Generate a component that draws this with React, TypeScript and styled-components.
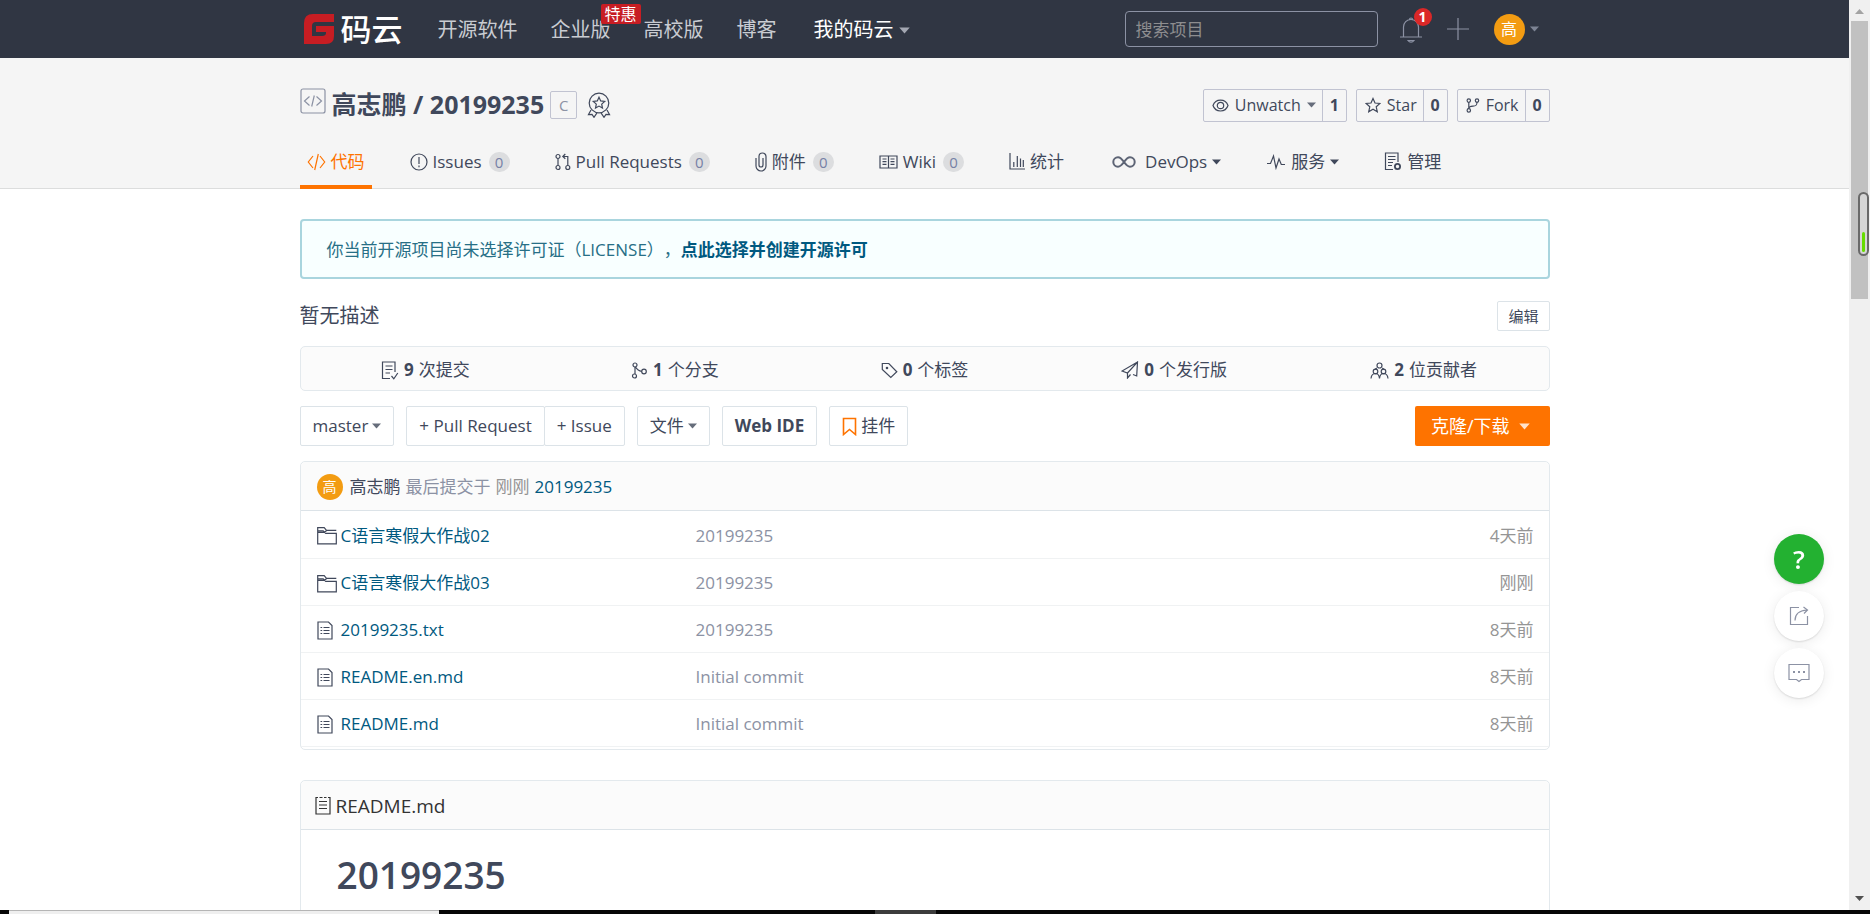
import React from "react";
import styled, { createGlobalStyle } from "styled-components";

const color = {
  navy: "#303643",
  ink: "#40485b",
  muted: "#8c92a4",
  grey: "#959595",
  link: "#005980",
  orange: "#fe7300",
  line: "#dce3e8",
  panel: "#fbfbfb",
};

const GlobalStyle = createGlobalStyle`
  *, *::before, *::after { box-sizing: border-box; }
  body {
    margin: 0;
    overflow: hidden;
    background: #fff;
    color: ${color.ink};
    font-family: "Open Sans", "Noto Sans CJK SC", sans-serif;
    font-size: 17px;
    line-height: 24px;
  }
  a { color: inherit; text-decoration: none; }
  button, input { font: inherit; color: inherit; margin: 0; }
  button { background: none; border: 0; padding: 0; cursor: pointer; }
  h1, h2, p, ul { margin: 0; padding: 0; }
  b { font-weight: 700; }
  ul { list-style: none; }
`;

/* ---------- frame ---------- */

const Frame = styled.div`
  display: flex;
  flex-direction: column;
  height: 100vh;
`;

const Viewport = styled.div`
  display: flex;
  flex: 1;
  min-height: 0;
`;

const Page = styled.div`
  flex: 1;
  min-width: 0;
  overflow: hidden;
`;

const ScrollTrack = styled.div`
  display: flex;
  flex-direction: column;
  align-items: center;
  width: 21px;
  padding: 9px 0;
  background: #f0f0f0;
`;

const ScrollThumb = styled.div`
  width: 17px;
  height: 278px;
  margin: 7px 0 auto;
  background: #c1c1c1;
`;

const Gauge = styled.div`
  position: fixed;
  top: 192px;
  right: 1px;
  display: flex;
  align-items: flex-end;
  width: 11px;
  height: 64px;
  padding: 2px;
  border: 2px solid #696969;
  border-radius: 6px;
  background: #d6d6d6;
`;

const GaugeLevel = styled.div`
  width: 100%;
  height: 20px;
  border-radius: 2px;
  background: #66dd00;
`;

const BottomStrip = styled.div`
  display: flex;
  height: 4px;
  background: #060606;
`;

const StripLight = styled.div`
  width: 430px;
  margin-left: 9px;
  border-top: 1px solid #b5b5b5;
  background: #efefef;
`;

const StripDark = styled.div`
  width: 61px;
  margin-left: 436px;
  background: #3c3c3c;
`;

const Container = styled.div`
  width: 1250px;
  max-width: 100%;
  margin: 0 auto;
`;

/* ---------- icons ---------- */

const Svg = styled.svg`
  display: block;
  flex: none;
  fill: none;
  stroke: currentColor;
  stroke-width: 1.2;
`;

type GlyphProps = { w: number; h: number; children: React.ReactNode };
const Glyph = ({ w, h, children }: GlyphProps) => (
  <Svg width={w} height={h} viewBox={`0 0 ${w} ${h}`} aria-hidden="true">
    {children}
  </Svg>
);

const Caret = ({ tint = "#666d7b", big }: { tint?: string; big?: boolean }) => (
  <Svg width={big ? 11 : 9} height={big ? 7 : 6} viewBox="0 0 9 6" aria-hidden="true">
    <path d="M0 0.5h9L4.5 5.5z" fill={tint} stroke="none" />
  </Svg>
);

const CodeIcon = () => (
  <Glyph w={19} h={18}>
    <path d="M6 3 1.3 9 6 15M13 3l4.7 6L13 15M11.3 1 7.7 17" />
  </Glyph>
);
const IssueIcon = () => (
  <Glyph w={18} h={18}>
    <circle cx="9" cy="9" r="8" />
    <path d="M9 4v7M9 12.5v1.8" />
  </Glyph>
);
const PullIcon = () => (
  <Glyph w={16} h={18}>
    <circle cx="3" cy="3.5" r="2" />
    <circle cx="3" cy="14.5" r="2" />
    <circle cx="12.8" cy="14.5" r="2" />
    <path d="M3 5.5v7M12.8 12.5V3.5H8M10.3 1 7.8 3.5l2.5 2.3" />
  </Glyph>
);
const ClipIcon = () => (
  <Glyph w={12} h={20}>
    <path d="M1 6v8a5 5 0 0 0 10 0V4.5a3.5 3.5 0 0 0-7 0V13a2 2 0 0 0 4 0V6" />
  </Glyph>
);
const BookIcon = () => (
  <Glyph w={19} h={14}>
    <path d="M1 1h17v12H1zM9.5 1v12M3.5 4h4M3.5 6.7h4M3.5 9.4h4M11.5 4h4M11.5 6.7h4M11.5 9.4h4" />
  </Glyph>
);
const ChartIcon = () => (
  <Glyph w={16} h={17}>
    <path d="M1 0v16h15M4.8 9v5M8.3 3v11M11.5 5.500v8.500M14.300 7v7" />
  </Glyph>
);
const InfinityIcon = () => (
  <Svg width="31" height="12" viewBox="-3 0 31 12" aria-hidden="true">
    <path
      strokeWidth="2"
      stroke="#5d6475"
      d="M12 6C9.500 2.500 8 1.300 6 1.300a4.700 4.700 0 0 0 0 9.400c2 0 3.500-1.200 6-4.700s4-4.700 6-4.700a4.700 4.700 0 0 1 0 9.400c-2 0-3.500-1.200-6-4.700z"
    />
  </Svg>
);
const PulseIcon = () => (
  <Glyph w={20} h={16}>
    <path d="M1 9.500h3.500L7.500 2l2.500 12 3-9 2.300 5.500H19" />
  </Glyph>
);
const ManageIcon = () => (
  <Glyph w={18} h={19}>
    <path d="M9 17.500H1.500V1H14v9M4 4.500h7.500M4 7.500h7.500M4 10.500h5M4 13.500h4" />
    <circle cx="13.500" cy="14.500" r="2.600" strokeWidth="1.800" />
  </Glyph>
);
const EyeIcon = () => (
  <Glyph w={17} h={13}>
    <path d="M1 6.500C3.500-.8 13.500-.8 16 6.500 13.500 13.800 3.500 13.800 1 6.500z" />
    <circle cx="8.500" cy="6.500" r="3.200" />
  </Glyph>
);
const StarIcon = () => (
  <Glyph w={16} h={16}>
    <path d="m8 1.500 2 4.500 4.900.5-3.700 3.300 1.100 4.900L8 12.200l-4.300 2.500 1.100-4.900L1.100 6.500 6 6z" />
  </Glyph>
);
const ForkIcon = () => (
  <Glyph w={14} h={15}>
    <circle cx="2.800" cy="2.600" r="1.700" />
    <circle cx="2.800" cy="12.400" r="1.700" />
    <circle cx="11" cy="2.600" r="1.700" />
    <path d="M2.800 4.300v6.400M11 4.300c0 3.200-1.200 3.700-4 3.900-2.500.2-4.200.8-4.200 2.500" />
  </Glyph>
);
const MedalIcon = () => (
  <Glyph w={24} h={26}>
    <circle cx="12" cy="11" r="9.800" />
    <path d="m12 5.200 1.700 3.700 4 .5-3 2.700.8 4-3.500-2-3.500 2 .8-4-3-2.700 4-.5z" />
    <path d="M4 18 1.500 22.500l3.500-.2 2 3 3-4.500M20 18l2.500 4.500-3.500-.2-2 3-3-4.500" />
  </Glyph>
);
const RepoIcon = () => (
  <Glyph w={26} h={26}>
    <g stroke={color.muted}>
      <rect x="1" y="1" width="24" height="24" rx="2" />
      <path d="m9.500 8.500-5 4.500 5 4.500M16.500 8.500l5 4.500-5 4.500M14.300 7.500l-2.600 11" />
    </g>
  </Glyph>
);
const BellIcon = () => (
  <Glyph w={22} h={28}>
    <path d="M3.500 22V12a7.500 7.500 0 0 1 15 0v10M0 22h22M8 25.500c1.500 2.200 4.500 2.200 6 0zM9.500 4.500a1.500 1.500 0 1 1 3 0" />
  </Glyph>
);
const PlusIcon = () => (
  <Glyph w={22} h={22}>
    <path d="M11 0v22M0 11h22" />
  </Glyph>
);
const CommitIcon = () => (
  <Glyph w={18} h={19}>
    <path d="M9 17.500H1.500V1H14v10M4.500 5h7M4.500 8.500h7M4.500 12h4.500M10.500 15l2.300 2.800L16.800 12" />
  </Glyph>
);
const BranchIcon = () => (
  <Glyph w={17} h={17}>
    <circle cx="4" cy="3" r="2" />
    <circle cx="3.500" cy="14" r="2" />
    <circle cx="13" cy="9.500" r="2.300" />
    <path d="M4 5v7M4.500 5c1.500 2.500 3.500 4 6.200 4.300" />
  </Glyph>
);
const TagIcon = () => (
  <Glyph w={17} h={17}>
    <path d="M1.300 1.500h6.500l8 8.300-6 5.700-8.500-8z" />
    <circle cx="6" cy="6" r=".7" fill="currentColor" />
  </Glyph>
);
const PlaneIcon = () => (
  <Glyph w={18} h={18}>
    <path d="M16.500 1 1 10l5.500 2L16.500 1l-.8 14-3.700-1.500M6.500 12v5l3-3.500" />
  </Glyph>
);
const PeopleIcon = () => (
  <Glyph w={19} h={17}>
    <circle cx="9.500" cy="3.500" r="2.500" />
    <circle cx="5.500" cy="9.500" r="2.300" />
    <circle cx="13.500" cy="9.500" r="2.300" />
    <path d="M1 16.500c.3-3 1.800-5 4.500-5s3.700 2 4 5c.3-3 1.300-5 4-5s4.200 2 4.500 5M7 6C5.500 6.500 5 7 4.800 8M12 6c1.500.5 2 1 2.200 2" />
  </Glyph>
);
const BookmarkIcon = () => (
  <Glyph w={15} h={19}>
    <path d="M1.500 1.500h12v16l-6-5-6 5z" stroke="#fe7300" strokeWidth="1.600" />
  </Glyph>
);
const FolderIcon = () => (
  <Glyph w={20} h={19}>
    <path d="M.7 17.800V6.300h6.500l2.300 -1.500h0M.7 4.500V1.700h6.500l2.300 2.600h9.800M.7 6.300V4.800h5.500l2.500 2.500h10.600v10.500H.7z" />
  </Glyph>
);
const FileIcon = () => (
  <Glyph w={16} h={19}>
    <path d="M1 1h10.500L15 4.500V18H1zM3.500 6.500h1.700M6.500 6.500h6M3.500 9.500h1.700M6.500 9.500h6M3.500 12.500h1.700M6.500 12.500h6" />
  </Glyph>
);
const ReadmeIcon = () => (
  <Glyph w={16} h={19}>
    <path d="M3 1.500H1V18h14V1.500h-2M4.500 1.500h3M9 1.500h2.500M4 5.500h8M4 9h8M4 12.500h8" />
  </Glyph>
);
const ShareIcon = () => (
  <Glyph w={20} h={20}>
    <path d="M10 1.500H1.500v17h17V10M6 14.500C6 8 10 4.500 18 4M14.500 1l4 3-3.500 3.500" />
  </Glyph>
);
const ChatIcon = () => (
  <Glyph w={22} h={20}>
    <path d="M1 1.500h20v15h-7.500l-2.500 2-2.500-2H1z" />
    <path d="M5 9h2M10 9h2M15 9h2" strokeWidth="2" />
  </Glyph>
);
const LogoMark = () => (
  <Svg width="30" height="30" viewBox="0 0 30 30" aria-hidden="true">
    <path
      d="M9 0H30V8H12Q8 8 8 12V22H18Q22 22 22 19V18H12V12H30V22Q30 30 22 30H0V9Q0 0 9 0z"
      fill="#c71d23"
      stroke="none"
    />
  </Svg>
);

/* ---------- top bar ---------- */

const TopBar = styled.header`
  background: ${color.navy};
`;

const TopInner = styled(Container)`
  display: flex;
  align-items: center;
  height: 58px;
  padding: 0 11px 0 4px;
`;

const Brand = styled.a`
  display: flex;
  align-items: center;
  gap: 7px;
  margin-right: 35px;
  color: #fff;
  font-size: 31px;
  font-weight: 500;
  line-height: 30px;
`;

const MainNav = styled.nav`
  display: flex;
  gap: 33px;
  padding-top: 2px;
  color: #c9ccd2;
  font-size: 20px;
`;

const NavLink = styled.a<{ $bright?: boolean }>`
  position: relative;
  display: flex;
  align-items: center;
  gap: 5px;
  margin-left: ${(p) => (p.$bright ? 4 : 0)}px;
  color: ${(p) => (p.$bright ? "#fff" : "inherit")};
`;

const Promo = styled.span`
  position: absolute;
  top: -14px;
  left: 50px;
  padding: 0 4px;
  border-radius: 2px;
  background: #c71d23;
  color: #fff;
  font-size: 16px;
  line-height: 20px;
  white-space: nowrap;
`;

const TopTools = styled.div`
  display: flex;
  align-items: center;
  margin-left: auto;
  color: #8c92a4;
`;

const Search = styled.input`
  width: 253px;
  height: 36px;
  margin-right: 22px;
  padding: 0 10px;
  border: 1px solid #8c92a4;
  border-radius: 4px;
  background: transparent;
  color: #fff;
  outline: none;
  &::placeholder {
    color: #8d8d8f;
    opacity: 1;
  }
`;

const IconButton = styled.button`
  position: relative;
  display: flex;
  align-items: center;
  gap: 5px;
  margin-right: 25px;
  &:last-child {
    margin-right: 0;
  }
`;

const Notice = styled.span`
  position: absolute;
  top: -7px;
  left: 14px;
  width: 18px;
  border-radius: 9px;
  background: #db2828;
  color: #fff;
  font-size: 14px;
  font-weight: 700;
  line-height: 18px;
  text-align: center;
`;

const Avatar = styled.span<{ $size: number }>`
  display: grid;
  place-items: center;
  flex: none;
  width: ${(p) => p.$size}px;
  height: ${(p) => p.$size}px;
  border-radius: 50%;
  background: #f39c12;
  color: #fff;
  font-size: ${(p) => (p.$size > 30 ? 16 : 14)}px;
  line-height: 1;
`;

/* ---------- repository header ---------- */

const RepoHead = styled.section`
  border-bottom: 1px solid #dcdddd;
  background: #f5f5f5;
`;

const TitleRow = styled.div`
  display: flex;
  align-items: center;
  justify-content: space-between;
  padding-top: 30px;
`;

const TitleGroup = styled.div`
  display: flex;
  align-items: center;
  gap: 6px;
  > svg:first-child {
    align-self: flex-start;
  }
`;

const RepoTitle = styled.h2`
  padding-bottom: 2px;
  font-size: 25px;
  font-weight: 700;
  line-height: 32px;
`;

const LangTag = styled.a`
  width: 27px;
  margin-right: 4px;
  border: 1px solid #c1c3d1;
  border-radius: 2px;
  color: ${color.muted};
  font-size: 15px;
  line-height: 26px;
  text-align: center;
`;

const Actions = styled.div`
  display: flex;
  gap: 9px;
`;

const SplitButton = styled.div`
  display: flex;
  border: 1px solid #c1c3d1;
  border-radius: 2px;
  line-height: 31px;
`;

const ActionButton = styled.button`
  display: flex;
  align-items: center;
  gap: 6px;
  padding: 0 6px 0 8px;
  font-size: 16px;
  line-height: 31px;
`;

const ActionCount = styled.a`
  min-width: 24px;
  border-left: 1px solid #c1c3d1;
  font-size: 16px;
  font-weight: 700;
  text-align: center;
`;

const Tabs = styled.nav`
  display: flex;
  gap: 31px;
  margin: 14px 0 -1px;
`;

const Tab = styled.a<{ $active?: boolean }>`
  display: flex;
  align-items: center;
  gap: 5px;
  height: 53px;
  padding: 2px 7px 0;
  border-bottom: 4px solid ${(p) => (p.$active ? color.orange : "transparent")};
  color: ${(p) => (p.$active ? color.orange : color.ink)};
`;

const TabCount = styled.span`
  min-width: 21px;
  margin-left: 2px;
  border-radius: 10px;
  background: #dcdddf;
  color: #7681a6;
  font-size: 15px;
  line-height: 20px;
  text-align: center;
`;

/* ---------- body ---------- */

const LicenseNote = styled.div`
  margin-top: 30px;
  padding: 17px 25px 15px;
  border: 2px solid #a9d5de;
  border-radius: 4px;
  background: #f8ffff;
  color: #276f86;
  text-spacing-trim: space-all;
  a {
    color: ${color.link};
    font-weight: 700;
  }
`;

const Description = styled.div`
  display: flex;
  align-items: center;
  justify-content: space-between;
  margin: 22px 0 15px;
  font-size: 20px;
`;

const EditButton = styled.button`
  padding: 0 10px;
  border: 1px solid ${color.line};
  border-radius: 2px;
  font-size: 15px;
  line-height: 28px;
`;

const Stats = styled.ul`
  display: grid;
  grid-template-columns: repeat(5, 1fr);
  border: 1px solid #e3e9ed;
  border-radius: 5px;
  background: ${color.panel};
`;

const Stat = styled.li`
  a {
    display: flex;
    align-items: center;
    justify-content: center;
    gap: 5px;
    padding: 11px 0 8px;
  }
`;

const Toolbar = styled.div`
  display: flex;
  align-items: center;
  gap: 12px;
  margin: 15px 0;
`;

const ToolButton = styled.button<{ $bold?: boolean }>`
  display: flex;
  align-items: center;
  gap: 4px;
  padding: 0 12px;
  border: 1px solid ${color.line};
  border-radius: 2px;
  background: #fff;
  font-weight: ${(p) => (p.$bold ? 700 : 400)};
  line-height: 38px;
  white-space: nowrap;
`;

const ButtonGroup = styled.div`
  display: flex;
  ${ToolButton} + ${ToolButton} {
    margin-left: -1px;
  }
`;

const CloneButton = styled.button`
  display: flex;
  align-items: center;
  gap: 9px;
  margin-left: auto;
  padding: 0 20px 0 16px;
  border-radius: 2px;
  background: ${color.orange};
  color: #fff;
  font-size: 18px;
  line-height: 40px;
`;

const Panel = styled.section`
  border: 1px solid #e3e9ed;
  border-radius: 5px;
  margin-bottom: 30px;
`;

const PanelHead = styled.div<{ $dark?: boolean }>`
  display: flex;
  align-items: center;
  gap: 5px;
  height: 49px;
  padding: 2px ${(p) => (p.$dark ? 14 : 16)}px 0;
  border-bottom: 1px solid ${color.line};
  border-radius: 5px 5px 0 0;
  background: ${color.panel};
  color: ${(p) => (p.$dark ? "#333" : color.muted)};
  font-size: ${(p) => (p.$dark ? 19 : 17)}px;
`;

const Author = styled.a`
  margin-left: 2px;
  color: ${color.ink};
`;

const BlueLink = styled.a`
  color: ${color.link};
`;

const When = styled.span`
  color: ${color.grey};
`;

const FileTable = styled.table`
  width: 100%;
  margin-bottom: 2px;
  border-collapse: collapse;
  td {
    height: 47px;
    padding: 3px 0 0;
    border-bottom: 1px solid #f0f2f3;
    color: ${color.muted};
  }
  td:first-child {
    width: 395px;
    padding-left: 16px;
  }
  td:last-child {
    padding-right: 15px;
    color: ${color.grey};
    text-align: right;
  }
`;

const FileName = styled.a`
  display: flex;
  align-items: center;
  color: ${color.link};
`;

const FileGlyph = styled.span`
  width: 24px;
  color: ${color.ink};
`;

const ReadmeBody = styled.div`
  padding: 20px 36px 60px;
`;

const ReadmeTitle = styled.h1`
  font-size: 37px;
  font-weight: 600;
  line-height: 50px;
`;

/* ---------- floating helpers ---------- */

const Helpers = styled.div`
  position: fixed;
  top: 534px;
  right: 46px;
  display: flex;
  flex-direction: column;
  gap: 7px;
`;

const Helper = styled.button<{ $green?: boolean }>`
  display: grid;
  place-items: center;
  width: 50px;
  height: 50px;
  border-radius: 50%;
  background: ${(p) => (p.$green ? "#23b131" : "#fff")};
  color: ${(p) => (p.$green ? "#fff" : color.muted)};
  font-size: 26px;
  font-weight: 600;
  box-shadow: 0 1px 2px rgba(0, 0, 0, 0.12), 0 2px 14px rgba(0, 0, 0, 0.08);
`;

/* ---------- data ---------- */

type TabItem = {
  label: string;
  icon: React.ReactNode;
  count?: number;
  active?: boolean;
  menu?: boolean;
};

const tabs: TabItem[] = [
  { label: "代码", icon: <CodeIcon />, active: true },
  { label: "Issues", icon: <IssueIcon />, count: 0 },
  { label: "Pull Requests", icon: <PullIcon />, count: 0 },
  { label: "附件", icon: <ClipIcon />, count: 0 },
  { label: "Wiki", icon: <BookIcon />, count: 0 },
  { label: "统计", icon: <ChartIcon /> },
  { label: "DevOps", icon: <InfinityIcon />, menu: true },
  { label: "服务", icon: <PulseIcon />, menu: true },
  { label: "管理", icon: <ManageIcon /> },
];

const stats = [
  { icon: <CommitIcon />, value: 9, label: "次提交" },
  { icon: <BranchIcon />, value: 1, label: "个分支" },
  { icon: <TagIcon />, value: 0, label: "个标签" },
  { icon: <PlaneIcon />, value: 0, label: "个发行版" },
  { icon: <PeopleIcon />, value: 2, label: "位贡献者" },
];

const files = [
  { name: "C语言寒假大作战02", folder: true, message: "20199235", when: "4天前" },
  { name: "C语言寒假大作战03", folder: true, message: "20199235", when: "刚刚" },
  { name: "20199235.txt", folder: false, message: "20199235", when: "8天前" },
  { name: "README.en.md", folder: false, message: "Initial commit", when: "8天前" },
  { name: "README.md", folder: false, message: "Initial commit", when: "8天前" },
];

export default function App() {
  return (
    <>
      <GlobalStyle />
      <Frame>
        <Viewport>
          <Page>
            <TopBar>
              <TopInner>
                <Brand href="#">
                  <LogoMark />
                  码云
                </Brand>
                <MainNav>
                  <NavLink href="#">开源软件</NavLink>
                  <NavLink href="#">
                    企业版
                    <Promo>特惠</Promo>
                  </NavLink>
                  <NavLink href="#">高校版</NavLink>
                  <NavLink href="#">博客</NavLink>
                  <NavLink href="#" $bright>
                    我的码云
                    <Caret tint="#a3a7b2" big />
                  </NavLink>
                </MainNav>
                <TopTools>
                  <Search type="search" placeholder="搜索项目" aria-label="搜索项目" />
                  <IconButton aria-label="通知">
                    <BellIcon />
                    <Notice>1</Notice>
                  </IconButton>
                  <IconButton aria-label="新建">
                    <PlusIcon />
                  </IconButton>
                  <IconButton>
                    <Avatar $size={31}>高</Avatar>
                    <Caret tint="#7d8494" />
                  </IconButton>
                </TopTools>
              </TopInner>
            </TopBar>

            <RepoHead>
              <Container>
                <TitleRow>
                  <TitleGroup>
                    <RepoIcon />
                    <RepoTitle>
                      <a href="#">高志鹏</a> / <a href="#">20199235</a>
                    </RepoTitle>
                    <LangTag href="#">C</LangTag>
                    <MedalIcon />
                  </TitleGroup>
                  <Actions>
                    <SplitButton>
                      <ActionButton>
                        <EyeIcon />
                        Unwatch
                        <Caret />
                      </ActionButton>
                      <ActionCount href="#">1</ActionCount>
                    </SplitButton>
                    <SplitButton>
                      <ActionButton>
                        <StarIcon />
                        Star
                      </ActionButton>
                      <ActionCount href="#">0</ActionCount>
                    </SplitButton>
                    <SplitButton>
                      <ActionButton>
                        <ForkIcon />
                        Fork
                      </ActionButton>
                      <ActionCount href="#">0</ActionCount>
                    </SplitButton>
                  </Actions>
                </TitleRow>
                <Tabs>
                  {tabs.map((t) => (
                    <Tab key={t.label} href="#" $active={t.active}>
                      {t.icon}
                      {t.label}
                      {t.count !== undefined && <TabCount>{t.count}</TabCount>}
                      {t.menu && <Caret tint={color.ink} />}
                    </Tab>
                  ))}
                </Tabs>
              </Container>
            </RepoHead>

            <Container as="main">
              <LicenseNote>
                你当前开源项目尚未选择许可证（LICENSE），
                <a href="#">点此选择并创建开源许可</a>
              </LicenseNote>

              <Description>
                <p>暂无描述</p>
                <EditButton>编辑</EditButton>
              </Description>

              <Stats>
                {stats.map((s) => (
                  <Stat key={s.label}>
                    <a href="#">
                      {s.icon}
                      <b>{s.value}</b>
                      {s.label}
                    </a>
                  </Stat>
                ))}
              </Stats>

              <Toolbar>
                <ToolButton>
                  master
                  <Caret />
                </ToolButton>
                <ButtonGroup>
                  <ToolButton>+ Pull Request</ToolButton>
                  <ToolButton>+ Issue</ToolButton>
                </ButtonGroup>
                <ToolButton>
                  文件
                  <Caret />
                </ToolButton>
                <ToolButton $bold>Web IDE</ToolButton>
                <ToolButton>
                  <BookmarkIcon />
                  挂件
                </ToolButton>
                <CloneButton>
                  克隆/下载
                  <Caret tint="#ffe3cc" big />
                </CloneButton>
              </Toolbar>

              <Panel>
                <PanelHead>
                  <Avatar $size={26}>高</Avatar>
                  <Author href="#">高志鹏</Author>
                  最后提交于
                  <When>刚刚</When>
                  <BlueLink href="#">20199235</BlueLink>
                </PanelHead>
                <FileTable>
                  <tbody>
                    {files.map((f) => (
                      <tr key={f.name}>
                        <td>
                          <FileName href="#">
                            <FileGlyph>{f.folder ? <FolderIcon /> : <FileIcon />}</FileGlyph>
                            {f.name}
                          </FileName>
                        </td>
                        <td>{f.message}</td>
                        <td>{f.when}</td>
                      </tr>
                    ))}
                  </tbody>
                </FileTable>
              </Panel>

              <Panel>
                <PanelHead $dark>
                  <ReadmeIcon />
                  README.md
                </PanelHead>
                <ReadmeBody>
                  <ReadmeTitle>20199235</ReadmeTitle>
                </ReadmeBody>
              </Panel>
            </Container>
          </Page>
          <ScrollTrack>
            <Glyph w={9} h={5}>
              <path d="M0 5h9L4.500 0z" fill="#a3a3a3" stroke="none" />
            </Glyph>
            <ScrollThumb />
            <Glyph w={9} h={5}>
              <path d="M0 0h9L4.500 5z" fill="#505050" stroke="none" />
            </Glyph>
          </ScrollTrack>
        </Viewport>
        <BottomStrip>
          <StripLight />
          <StripDark />
        </BottomStrip>
      </Frame>
      <Gauge>
        <GaugeLevel />
      </Gauge>
      <Helpers>
        <Helper $green aria-label="帮助">?</Helper>
        <Helper aria-label="分享">
          <ShareIcon />
        </Helper>
        <Helper aria-label="反馈">
          <ChatIcon />
        </Helper>
      </Helpers>
    </>
  );
}
